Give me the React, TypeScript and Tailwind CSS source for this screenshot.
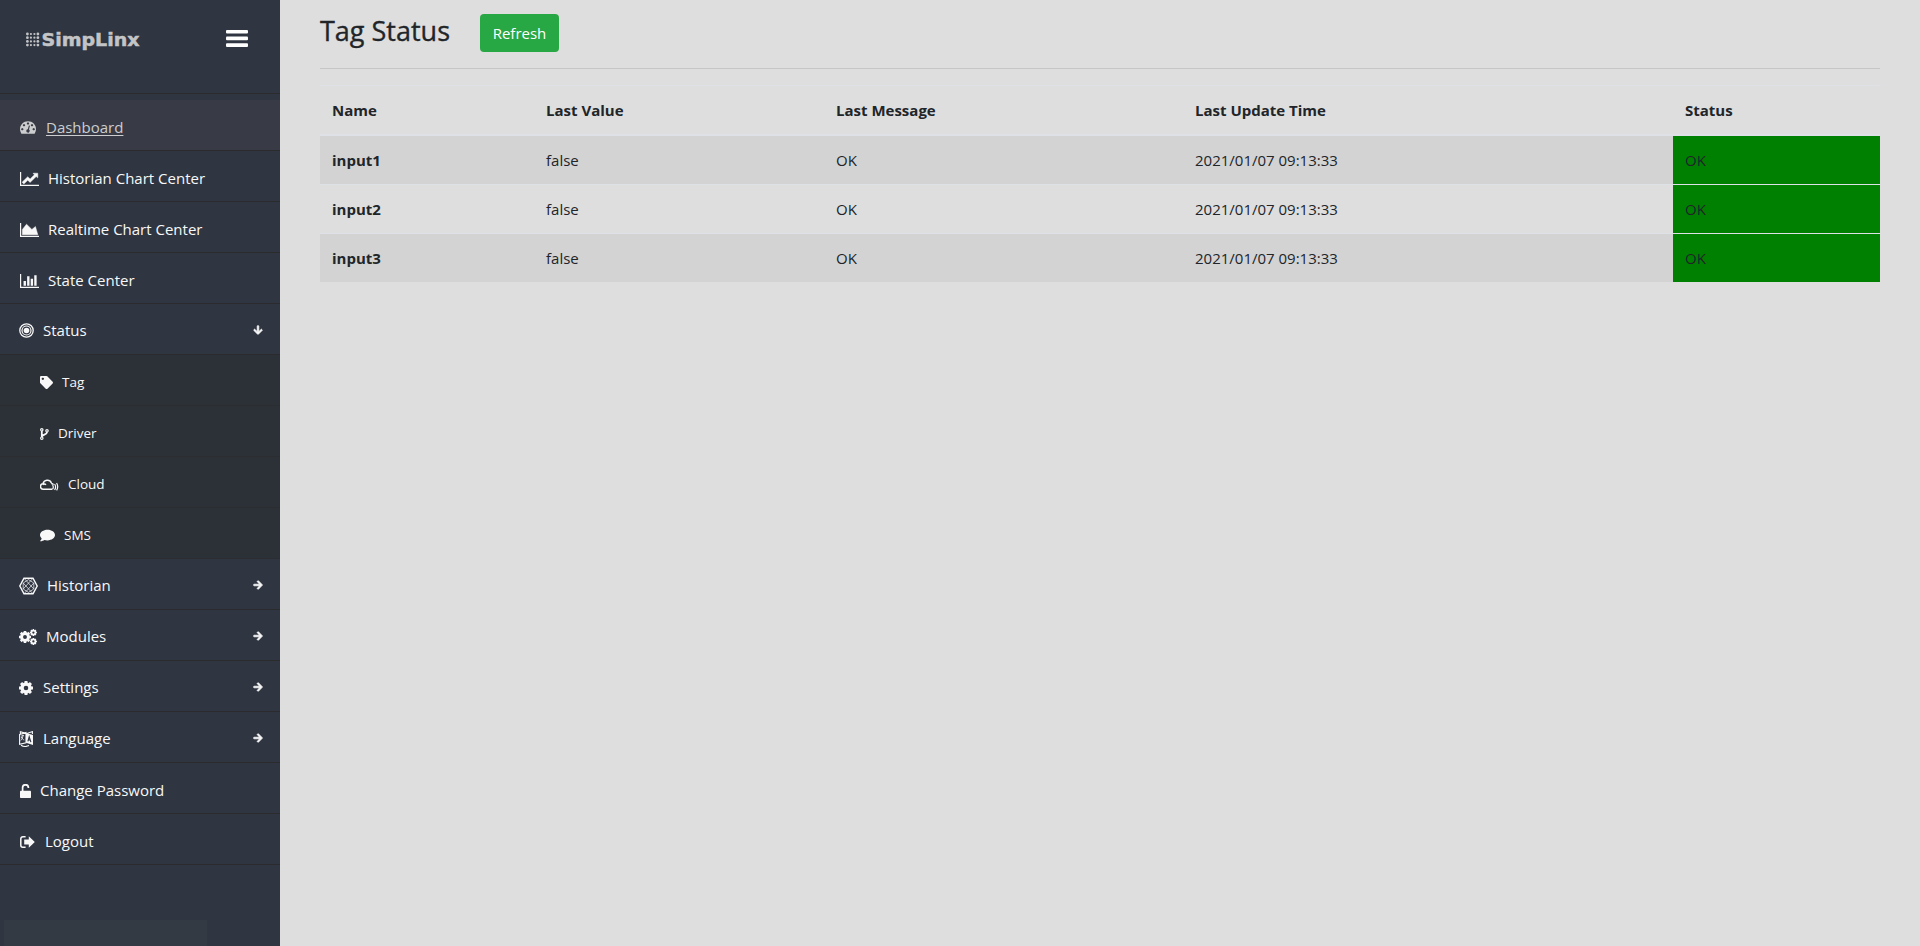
import { ReactNode, useState } from "react";
import { FaArrowDown, FaArrowRight, FaComment, FaTag } from "react-icons/fa";

interface MenuItem {
  label: string;
  icon: ReactNode;
  kind: "link" | "group" | "sub";
  open?: boolean;
}

interface TagRow {
  name: string;
  value: string;
  message: string;
  updated: string;
  status: string;
}

function DashboardIcon() {
  return (
    <svg viewBox="0 256 1792 1408" className="w-4 h-[13px]" fill="currentColor">
      <path d="M384 1152q0-53-37.5-90.5t-90.5-37.5-90.5 37.5-37.5 90.5 37.5 90.5 90.5 37.5 90.5-37.5 37.5-90.5zM576 704q0-53-37.5-90.5t-90.5-37.5-90.5 37.5-37.5 90.5 37.5 90.5 90.5 37.5 90.5-37.5 37.5-90.5zM1004 1185l101-382q6-26-7.5-48.5t-38.5-29.5-48 6.5-30 39.5l-101 382q-60 5-107 43.5t-63 98.5q-20 77 20 146t117 89 146-20 89-117q16-60-6-117t-72-91zM1664 1152q0-53-37.5-90.5t-90.5-37.5-90.5 37.5-37.5 90.5 37.5 90.5 90.5 37.5 90.5-37.5 37.5-90.5zM1024 512q0-53-37.5-90.5t-90.5-37.5-90.5 37.5-37.5 90.5 37.5 90.5 90.5 37.5 90.5-37.5 37.5-90.5zM1472 704q0-53-37.5-90.5t-90.5-37.5-90.5 37.5-37.5 90.5 37.5 90.5 90.5 37.5 90.5-37.5 37.5-90.5zM1792 1152q0 261-141 483-19 29-54 29h-1402q-35 0-54-29-141-221-141-483 0-182 71-348t191-286 286-191 348-71 348 71 286 191 191 286 71 348z" />
    </svg>
  );
}

function ChartIcon({ type }: { type: "line" | "area" | "bar" }) {
  return (
    <svg viewBox="0 128 2048 1536" className="w-[19px] h-[14px]" preserveAspectRatio="none" fill="currentColor">
      <path d="M2048 1520v144H0V128h128v1392z" />
      {type === "line" && (
        <path
          d="M1920 288v435q0 21-19.5 29.5t-35.5-7.5l-121-121-633 633q-10 10-23 10t-23-10l-233-233-416 416-192-192 585-585q10-10 23-10t23 10l233 233 464-464-121-121q-16-16-7.5-35.5t29.5-19.5h435q14 0 23 9t9 23z"
          stroke="currentColor"
          strokeWidth="50"
        />
      )}
      {type === "area" && <path d="M1664 512l256 896H256V832l448-576 576 576z" stroke="currentColor" strokeWidth="50" />}
      {type === "bar" && (
        <path d="M640 896v512H384V896zM1024 384v1024H768V384zM1408 640v768h-256V640zM1792 256v1152h-256V256z" />
      )}
    </svg>
  );
}

function TargetIcon() {
  return (
    <svg viewBox="0 0 15 15" className="w-[15px] h-[15px]" fill="none" stroke="currentColor">
      <circle cx="7.5" cy="7.5" r="6.7" strokeWidth="1.3" />
      <circle cx="7.5" cy="7.5" r="4.5" strokeWidth="1.2" />
      <circle cx="7.5" cy="7.5" r="2.8" fill="currentColor" stroke="none" />
    </svg>
  );
}

function ForkIcon() {
  return (
    <svg viewBox="0 0 9 12" className="w-[9px] h-[12px]" fill="none" stroke="currentColor" strokeWidth="1.2">
      <circle cx="1.8" cy="1.8" r="1.2" />
      <circle cx="7" cy="2.8" r="1.2" />
      <circle cx="1.8" cy="10.2" r="1.2" />
      <path d="M1.8 3v6M7 4c0 2.8-4.4 2.2-5 4.4" strokeWidth="1.8" />
    </svg>
  );
}

function CloudIcon() {
  return (
    <svg viewBox="0 0 19 12" className="w-[19px] h-[12px]" fill="none" stroke="currentColor" strokeWidth="1.5">
      <path d="M12.4 10.2H3.4A2.7 2.7 0 0 1 3 4.8 4.4 4.4 0 0 1 11.4 4M3 5.6c1-.8 2.2-.6 3 .2M11.2 4.4c1.2 0 2 .6 2.2 1.4" />
      <path d="M12.6 6q1.4 2.2 0 4.2M14.6 5q2 3 0 6M16.6 4q2.2 4 0 7.4" strokeWidth="1.2" />
    </svg>
  );
}

function HexIcon() {
  return (
    <svg viewBox="0 0 19 18" className="w-[19px] h-[18px]" fill="none" stroke="currentColor">
      <path d="M5 1.2h9l4.2 7.8-4.2 7.8H5L.8 9z" strokeWidth="1.5" />
      <path d="M5 1.2L14.8 12M14 1.2L4.2 12M5 16.8L14.8 6M14 16.8L4.2 6M4.2 6v6l5.3 3.4 5.3-3.4V6L9.5 2.6z" strokeWidth=".7" />
    </svg>
  );
}

// one gear with eight teeth, r is the outer radius
function Gear({ cx, cy, r }: { cx: number; cy: number; r: number }) {
  return (
    <g transform={`translate(${cx} ${cy}) scale(${r / 7})`} fill="none" stroke="currentColor">
      <circle r="4" strokeWidth="3.4" />
      {[0, 45, 90, 135].map((deg) => (
        <path key={deg} d="M0-7v2.2M0 4.8V7" strokeWidth="3" transform={`rotate(${deg})`} />
      ))}
    </g>
  );
}

function LanguageIcon() {
  return (
    <svg viewBox="0 0 15 16" className="w-[15px] h-[16px]" fill="none" stroke="currentColor" strokeWidth="1.1">
      <path d="M.6 3.5L7 1.6v10.2L.6 13.4zM1.4 3V.8L7 2.4M13.4 3V.6L8 2.4" />
      <path d="M7 2l7 2v10l-7-2.2z" fill="currentColor" stroke="none" />
      <path d="M2 5.2l3-.7M3.8 3.7c.3 3-1 5.2-2.2 5.9M2.2 6c.8 1.5 1.8 2.6 3 3" strokeWidth=".8" />
      <path d="M8.9 10.3l1.3-4.7 1.7 5.5M9.2 8.7l2.2.6" className="stroke-[#2f3541]" />
      <path d="M2 14.2c2.8 1.6 5.6 1.6 8 .4" />
    </svg>
  );
}

function UnlockIcon() {
  return (
    <svg viewBox="0 0 11 14" className="w-[11px] h-[14px]">
      <rect x="0" y="6.8" width="11" height="7.2" rx=".7" fill="currentColor" />
      <path d="M2.6 7.5V3.8a2.9 2.9 0 0 1 5.8-.2v.5" fill="none" stroke="currentColor" strokeWidth="1.7" />
    </svg>
  );
}

function LogoutIcon() {
  return (
    <svg viewBox="0 0 16 12" className="w-[16px] h-[12px]" fill="currentColor">
      <path d="M5.6.8H2.8a2 2 0 0 0-2 2v6.4a2 2 0 0 0 2 2h2.8" fill="none" stroke="currentColor" strokeWidth="1.5" />
      <path d="M14.8 6L8.8 11.7V8.6H4.2V3.4h4.6V.3z" />
    </svg>
  );
}

const menu: MenuItem[] = [
  { label: "Historian Chart Center", kind: "link", icon: <ChartIcon type="line" /> },
  { label: "Realtime Chart Center", kind: "link", icon: <ChartIcon type="area" /> },
  { label: "State Center", kind: "link", icon: <ChartIcon type="bar" /> },
  { label: "Status", kind: "group", open: true, icon: <TargetIcon /> },
  { label: "Tag", kind: "sub", icon: <FaTag className="w-[13px] h-[13px]" /> },
  { label: "Driver", kind: "sub", icon: <ForkIcon /> },
  { label: "Cloud", kind: "sub", icon: <CloudIcon /> },
  { label: "SMS", kind: "sub", icon: <FaComment className="w-[15px] h-[13px]" preserveAspectRatio="none" /> },
  { label: "Historian", kind: "group", icon: <HexIcon /> },
  {
    label: "Modules",
    kind: "group",
    icon: (
      <svg viewBox="0 0 18 16" className="w-[18px] h-[16px]">
        <Gear cx={6} cy={8} r={6} />
        <Gear cx={14.4} cy={3.6} r={3.5} />
        <Gear cx={14.4} cy={12.4} r={3.5} />
      </svg>
    ),
  },
  {
    label: "Settings",
    kind: "group",
    icon: (
      <svg viewBox="0 0 15 14" className="w-[15px] h-[14px]">
        <Gear cx={7} cy={7} r={7} />
      </svg>
    ),
  },
  { label: "Language", kind: "group", icon: <LanguageIcon /> },
  { label: "Change Password", kind: "link", icon: <UnlockIcon /> },
  { label: "Logout", kind: "link", icon: <LogoutIcon /> },
];

const rowStyles = {
  link: "pl-5 pt-[5px] text-[15px] border-[#2b2b2d]",
  group: "pl-[19px] pt-[3px] text-[15px] border-[#2b2b2d]",
  sub: "pl-10 pt-[5px] text-[13.5px] bg-[#2c3037] border-[#2b2b2d]/60",
};

const columns = ["Name", "Last Value", "Last Message", "Last Update Time", "Status"];

const rows: TagRow[] = ["input1", "input2", "input3"].map((name) => ({
  name,
  value: "false",
  message: "OK",
  updated: "2021/01/07 09:13:33",
  status: "OK",
}));

const logoDots = [0, 1, 2, 3].flatMap((r) =>
  [0, 1, 2, 3].map((c) => ({ x: 2.4 + c * 3.5, y: 6 + r * 3.7, r: c === 1 || c === 2 ? 1.1 : 1.4 }))
);

function Logo() {
  return (
    <svg width="118" height="24" viewBox="0 0 118 24" className="fill-[#c3c4c6]">
      {logoDots.map((dot) => (
        <circle key={`${dot.x}-${dot.y}`} cx={dot.x} cy={dot.y} r={dot.r} />
      ))}
      <text
        x="16.5"
        y="17.7"
        textLength="98"
        lengthAdjust="spacingAndGlyphs"
        className="font-['DejaVu_Sans'] text-[18px] font-bold stroke-[#c3c4c6] stroke-[0.5]"
      >
        SimpLinx
      </text>
    </svg>
  );
}

function Sidebar() {
  return (
    <aside className="w-[280px] shrink-0 flex flex-col bg-[#2f3541] text-[#f8f8f8]">
      <div className="h-[94px] shrink-0 flex items-start justify-between pt-[28px] pl-[25px] pr-8 border-b border-[#2b2b2d]">
        <Logo />
        <button aria-label="Menu" className="cursor-pointer">
          <svg width="22" height="20" viewBox="0 0 22 20" fill="white">
            <rect y="2" width="22" height="3.6" rx="1" />
            <rect y="8.6" width="22" height="3.6" rx="1" />
            <rect y="15.3" width="22" height="3.6" rx="1" />
          </svg>
        </button>
      </div>
      <nav className="pt-1.5 flex-1">
        <a className="h-[51px] flex items-center gap-2.5 pl-5 pt-[5px] text-[15px] text-[#cccdcf] bg-[#383b45] border-b border-[#2b2b2d] cursor-pointer">
          <DashboardIcon />
          <span className="underline underline-offset-2">Dashboard</span>
        </a>
        {menu.map((item) => (
          <a
            key={item.label}
            className={`h-[51px] flex items-center gap-[9px] pr-[17px] border-b cursor-pointer ${rowStyles[item.kind]}`}
          >
            <span className="shrink-0">{item.icon}</span>
            <span className="flex-1 whitespace-nowrap">{item.label}</span>
            {item.kind === "group" &&
              (item.open ? (
                <FaArrowDown className="w-2.5 h-2.5 -mt-0.5 overflow-visible stroke-current stroke-[40]" />
              ) : (
                <FaArrowRight className="w-2.5 h-2.5 -mt-0.5 overflow-visible stroke-current stroke-[40]" />
              ))}
          </a>
        ))}
      </nav>
      <div className="ml-1 w-[203px] h-[26px] bg-[#343a43]" />
    </aside>
  );
}

export default function App() {
  const [data, setData] = useState(rows);

  return (
    <div className="flex h-screen overflow-hidden bg-[#dedede] font-['Open_Sans',sans-serif] text-[15px] text-[#212529]">
      <Sidebar />
      <main className="flex-1 px-10">
        <div className="flex items-start h-[69px] pt-3.5 border-b border-[#c6c6c6]">
          <h3 className="w-40 pt-px text-[27px] leading-8 font-medium whitespace-nowrap [-webkit-text-stroke:0.35px]">
            Tag Status
          </h3>
          <button
            onClick={() => setData([...rows])}
            className="h-[38px] w-[79px] rounded bg-[#28a745] text-white cursor-pointer"
          >
            Refresh
          </button>
        </div>
        <table className="mt-4 w-full table-fixed border-separate border-spacing-0 text-left leading-6">
          <colgroup>
            <col className="w-[214px]" />
            <col className="w-[290px]" />
            <col className="w-[359px]" />
            <col className="w-[490px]" />
            <col className="w-[207px]" />
          </colgroup>
          <thead>
            <tr>
              {columns.map((col) => (
                <th key={col} className="p-3 font-bold border-t border-b-2 border-[#dee2e6]">
                  {col}
                </th>
              ))}
            </tr>
          </thead>
          <tbody>
            {data.map((row, i) => {
              const cell = `p-3 ${i > 0 ? "border-t border-[#dee2e6]" : ""}`;
              return (
                <tr key={row.name} className="odd:bg-[#d3d3d3]">
                  <th className={`${cell} font-bold`}>{row.name}</th>
                  <td className={cell}>{row.value}</td>
                  <td className={cell}>{row.message}</td>
                  <td className={cell}>{row.updated}</td>
                  <td className={`${cell} bg-[#008000]`}>{row.status}</td>
                </tr>
              );
            })}
          </tbody>
        </table>
      </main>
    </div>
  );
}
